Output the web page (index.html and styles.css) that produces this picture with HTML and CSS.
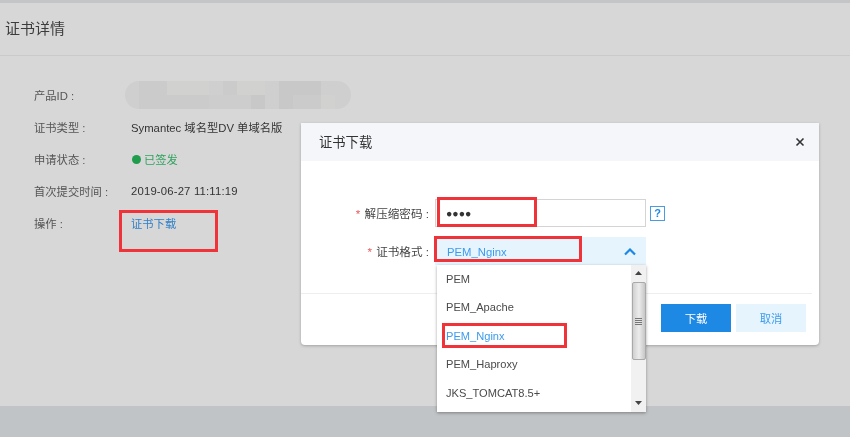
FILE: index.html
```html
<!DOCTYPE html>
<html lang="zh">
<head>
<meta charset="utf-8">
<title>证书详情</title>
<link rel="stylesheet" href="styles.css">
</head>
<body>
<div class="page">
  <div class="topband"></div>
  <main class="panel">
    <h1 class="panel-title">证书详情</h1>
    <dl class="details">
      <div class="row"><dt>产品ID :</dt><dd>
        <svg class="mosaic" width="226" height="28" viewBox="0 0 226 28">
          <rect width="226" height="28" rx="14" fill="#cfcfcf"/>
          <g fill="#cbcbcb"><rect x="14" width="28" height="14"/><rect x="98" y="0" width="14" height="14"/><rect x="14" y="14" width="70" height="14"/></g>
          <g fill="#d1d1cf"><rect x="42" width="42" height="14"/><rect x="112" y="0" width="28" height="14"/><rect x="196" y="14" width="14" height="14"/></g>
          <g fill="#c8c8c8"><rect x="154" y="0" width="42" height="14"/><rect x="126" y="14" width="14" height="14"/><rect x="168" y="14" width="28" height="14" fill="#cbcbcb"/><rect x="154" y="14" width="14" height="14"/></g>
          <rect x="84" y="14" width="42" height="14" fill="#cdcdcd"/>
        </svg>
      </dd></div>
      <div class="row"><dt>证书类型 :</dt><dd>Symantec 域名型DV 单域名版</dd></div>
      <div class="row"><dt>申请状态 :</dt><dd class="status"><span class="dot"></span>已签发</dd></div>
      <div class="row"><dt>首次提交时间 :</dt><dd class="date">2019-06-27 11:11:19</dd></div>
      <div class="row"><dt>操作 :</dt><dd class="link">证书下载</dd></div>
    </dl>
  </main>
  <div class="bottomband"></div>

  <section class="modal">
    <header class="modal-head">
      <h2>证书下载</h2>
      <svg class="close" width="10" height="10" viewBox="0 0 10 10"><path d="M1.500 1.500l7 7M8.500 1.500l-7 7" stroke="#333" stroke-width="1.6" fill="none"/></svg>
    </header>
    <div class="modal-body">
      <div class="form-row">
        <label class="form-label"><span class="req">*</span> 解压缩密码 :</label>
        <div class="input"><span class="pwd">●●●●</span></div>
        <span class="help">?</span>
      </div>
      <div class="form-row">
        <label class="form-label"><span class="req">*</span> 证书格式 :</label>
        <div class="select">
          <span>PEM_Nginx</span>
          <svg width="12" height="8" viewBox="0 0 12 8"><path d="M1 6.500l5-5 5 5" stroke="#1e88e5" stroke-width="2.200" fill="none"/></svg>
        </div>
      </div>
    </div>
    <footer class="modal-foot">
      <button class="btn primary">下载</button>
      <button class="btn ghost">取消</button>
    </footer>
  </section>

  <div class="dropdown">
    <ul class="options">
      <li>PEM</li>
      <li>PEM_Apache</li>
      <li class="selected">PEM_Nginx</li>
      <li>PEM_Haproxy</li>
      <li>JKS_TOMCAT8.5+</li>
    </ul>
    <div class="scrollbar">
      <svg class="arrow" width="7" height="4" viewBox="0 0 7 4"><path d="M3.500 0L7 4H0z" fill="#444"/></svg>
      <div class="thumb"><i></i><i></i><i></i><i></i></div>
      <svg class="arrow arrow-down" width="7" height="4" viewBox="0 0 7 4"><path d="M0 0h7L3.500 4z" fill="#444"/></svg>
    </div>
  </div>

  <div class="mark mark-link"></div>
  <div class="mark mark-pwd"></div>
  <div class="mark mark-format"></div>
  <div class="mark mark-option"></div>
</div>
</body>
</html>
```

FILE: styles.css
```css
* { box-sizing: border-box; }
html, body { margin: 0; padding: 0; }
body {
  font-family: "Liberation Sans", "Noto Sans CJK SC", sans-serif;
  font-size: 11.3px;
  color: #333;
  background: #c1c4c6;
}
.page {
  position: relative;
  width: 850px;
  height: 437px;
  overflow: hidden;
  display: flex;
  flex-direction: column;
  filter: blur(0.35px);
}
.topband { height: 3px; background: #c3c5c7; }
.panel { height: 403px; background: #d7d7d7; }
.bottomband { flex: 1; background: #c1c4c6; }
.panel-title {
  margin: 0;
  height: 53px;
  padding-left: 5px;
  border-bottom: 1px solid #cacaca;
  font-size: 15px;
  font-weight: 400;
  line-height: 52px;
  color: #3c3c3c;
}
.details { margin: 23px 0 0; padding-left: 34px; }
.row { display: flex; align-items: center; height: 32px; }
.row dt { width: 97px; color: #555; }
.row dd { margin: 0; color: #333; }
.mosaic { display: block; margin-left: -6px; }
.row .date { letter-spacing: 0.18px; }
.row .status { display: flex; align-items: center; color: #2fa35f; }
.dot {
  width: 9px;
  height: 9px;
  margin: 0 3px 0 1px;
  border-radius: 50%;
  background: #1f9d4d;
}
.row .link { color: #2f80c8; }

.modal {
  position: absolute;
  left: 301px;
  top: 123px;
  width: 518px;
  height: 222px;
  background: #fff;
  border-radius: 0 0 4px 4px;
  box-shadow: 0 1px 3px rgba(0, 0, 0, 0.25);
  display: flex;
  flex-direction: column;
}
.modal-head {
  height: 38px;
  padding: 0 14px 1px 18px;
  background: #f4f6fa;
  display: flex;
  align-items: center;
  justify-content: space-between;
}
.modal-head h2 { margin: 0; font-size: 13.3px; font-weight: 400; color: #333; }
.modal-body { height: 132px; padding-top: 38px; display: flex; flex-direction: column; gap: 10px; }
.form-row { display: flex; align-items: center; height: 28px; }
.form-label {
  width: 134px;
  padding-right: 6px;
  font-size: 11.6px;
  text-align: right;
  color: #444;
  white-space: nowrap;
}
.req { margin-right: 1px; color: #e9585d; }
.input {
  width: 211px;
  height: 28px;
  border: 1px solid #d4d4d4;
  display: flex;
  align-items: center;
  padding-left: 10px;
  background: #fff;
}
.pwd { font-size: 10.5px; color: #333; }
.help {
  width: 15px;
  height: 15px;
  margin-left: 4px;
  border: 1px solid #4a9be0;
  color: #1e88e5;
  font-size: 11px;
  font-weight: 700;
  line-height: 13px;
  text-align: center;
}
.select {
  width: 211px;
  height: 28px;
  padding: 2px 10px 0 12px;
  background: #e6f4fd;
  color: #3d9bee;
  display: flex;
  align-items: center;
  justify-content: space-between;
}
.modal-foot {
  margin: 0 7px 0 0;
  border-top: 1px solid #eeeeee;
  flex: 1;
  display: flex;
  justify-content: flex-end;
  gap: 5px;
  padding: 10px 6px 0 0;
}
.btn {
  width: 70px;
  height: 28px;
  border: 0;
  padding: 0;
  font: inherit;
}
.primary { background: #1e88e5; color: #fff; }
.ghost { background: #e6f4fd; color: #3d9bee; }

.dropdown {
  position: absolute;
  left: 437px;
  top: 265px;
  width: 209px;
  height: 147px;
  background: #fff;
  box-shadow: 0 1px 3px rgba(0, 0, 0, 0.35);
  display: flex;
}
.options { flex: 1; margin: 0; padding: 0; list-style: none; }
.options li { height: 28.4px; font-size: 11.1px; line-height: 28.4px; padding-left: 9px; color: #4a4a4a; }
.options .selected { color: #3d9bee; }
.scrollbar {
  width: 15px;
  background: #f1f1f1;
  display: flex;
  flex-direction: column;
  align-items: center;
  padding: 6px 0 7px;
}
.arrow-down { margin-top: auto; }
.thumb {
  width: 14px;
  height: 78px;
  margin-top: 7px;
  border: 1px solid #a9a9a9;
  border-radius: 2px;
  background: linear-gradient(90deg, #d0d0d0, #ececec 50%, #c6c6c6);
  display: flex;
  flex-direction: column;
  align-items: center;
  justify-content: center;
  gap: 1px;
}
.thumb i { display: block; width: 7px; height: 1px; background: #777; }

.mark { position: absolute; border: 3px solid #ef3339; }
.mark-link { left: 119px; top: 210px; width: 99px; height: 42px; }
.mark-pwd { left: 437px; top: 197px; width: 100px; height: 30px; }
.mark-format { left: 434px; top: 236px; width: 148px; height: 26px; }
.mark-option { left: 442px; top: 323px; width: 125px; height: 25px; }
```
